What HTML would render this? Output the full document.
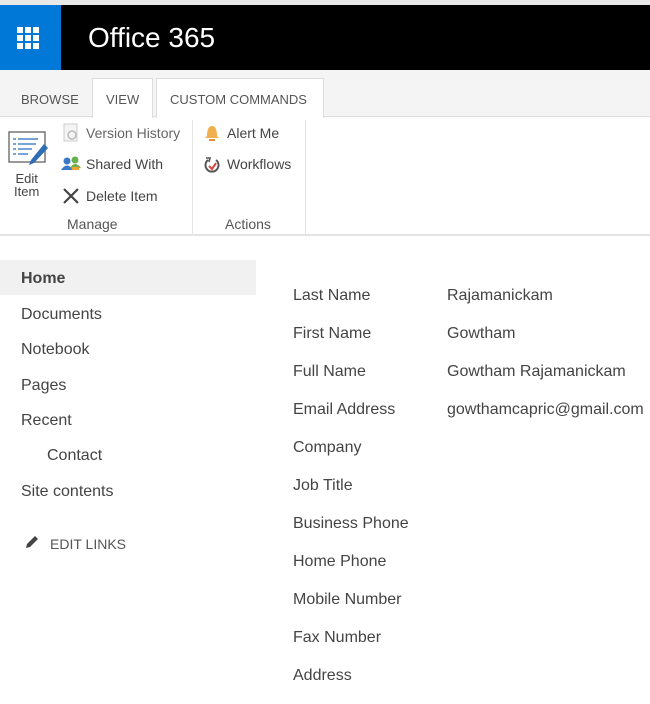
<!DOCTYPE html>
<html><head><style>
*{margin:0;padding:0;box-sizing:border-box}
body{width:650px;height:704px;overflow:hidden;background:#fff;font-family:"Liberation Sans",sans-serif;color:#444;position:relative}
.a{position:absolute;white-space:nowrap}
</style></head><body>
<div class="a" style="left:0;top:0;width:650px;height:5px;background:#e8e8e8"></div>
<div class="a" style="left:0;top:5px;width:650px;height:65px;background:#000"></div>
<div class="a" style="left:0;top:5px;width:61px;height:65px;background:#0078d7"></div>
<svg class="a" style="left:17px;top:27px" width="22" height="22" viewBox="0 0 22 22" fill="#fff">
<rect x="0" y="0" width="6" height="6"/><rect x="8" y="0" width="6" height="6"/><rect x="16" y="0" width="6" height="6"/>
<rect x="0" y="8" width="6" height="6"/><rect x="8" y="8" width="6" height="6"/><rect x="16" y="8" width="6" height="6"/>
<rect x="0" y="16" width="6" height="6"/><rect x="8" y="16" width="6" height="6"/><rect x="16" y="16" width="6" height="6"/></svg>
<div class="a" style="left:88px;top:22px;font-size:28px;color:#fff">Office 365</div>
<div class="a" style="left:0;top:70px;width:650px;height:47px;background:#f4f4f4;border-bottom:1px solid #ddd"></div>
<div class="a" style="left:92px;top:78px;width:61px;height:40px;background:#fff;border:1px solid #ddd;border-bottom:none"></div>
<div class="a" style="left:156px;top:78px;width:168px;height:40px;background:#fff;border:1px solid #ddd;border-bottom:none"></div>
<div class="a" style="left:21px;top:92px;font-size:13px;color:#555">BROWSE</div>
<div class="a" style="left:106px;top:92px;font-size:13px;color:#555">VIEW</div>
<div class="a" style="left:170px;top:92px;font-size:13px;color:#555">CUSTOM COMMANDS</div>
<div class="a" style="left:0;top:234px;width:650px;height:2px;background:#e4e4e4"></div>
<div class="a" style="left:192px;top:120px;width:1px;height:114px;background:#e4e4e4"></div>
<div class="a" style="left:305px;top:120px;width:1px;height:114px;background:#e4e4e4"></div>
<svg class="a" style="left:8px;top:130px" width="40" height="40" viewBox="0 0 40 40">
<rect x="1" y="2" width="36" height="30" fill="#fff" stroke="#777" stroke-width="1.5"/>
<g stroke="#4a86c8" stroke-width="1.5"><line x1="5" y1="9" x2="8" y2="9"/><line x1="10" y1="9" x2="30" y2="9"/><line x1="5" y1="14" x2="8" y2="14"/><line x1="10" y1="14" x2="28" y2="14"/><line x1="5" y1="19" x2="8" y2="19"/><line x1="10" y1="19" x2="24" y2="19"/><line x1="5" y1="24" x2="8" y2="24"/><line x1="10" y1="24" x2="20" y2="24"/></g>
<path d="M36 14 L40 18 L26 33 L21 35 L23 30 Z" fill="#2f6db5"/></svg>
<div class="a" style="left:14px;top:172px;font-size:13px;line-height:13px;color:#444;text-align:center">Edit<br>Item</div>
<svg class="a" style="left:62px;top:123px" width="18" height="20"><rect x="2" y="1" width="13" height="17" fill="#f4f4f4" stroke="#ccc"/><circle cx="10" cy="12" r="4" fill="none" stroke="#bbb" stroke-width="1.5"/></svg>
<div class="a" style="left:86px;top:125px;font-size:14px;color:#666">Version History</div>
<svg class="a" style="left:61px;top:155px" width="22" height="20"><circle cx="6" cy="6" r="3.5" fill="#3a78c8"/><path d="M0 15 Q6 6 12 15Z" fill="#3a78c8"/><circle cx="14" cy="5" r="3.5" fill="#6ab04c"/><path d="M9 13 Q14 5 20 13Z" fill="#6ab04c"/><rect x="11" y="12" width="7" height="3" fill="#f0a030"/></svg>
<div class="a" style="left:86px;top:156px;font-size:14px;color:#444">Shared With</div>
<svg class="a" style="left:62px;top:187px" width="18" height="18"><path d="M2 2 L16 16 M16 2 L2 16" stroke="#444" stroke-width="2.2"/></svg>
<div class="a" style="left:86px;top:188px;font-size:14px;color:#444">Delete Item</div>
<div class="a" style="left:67px;top:216px;font-size:14px;color:#555">Manage</div>
<svg class="a" style="left:204px;top:124px" width="16" height="18"><path d="M3 12 Q3 2 8 2 Q13 2 13 12 L15 14 L1 14 Z" fill="#f0b050"/><rect x="5" y="15" width="6" height="2" fill="#e09030"/></svg>
<div class="a" style="left:227px;top:125px;font-size:14px;color:#444">Alert Me</div>
<svg class="a" style="left:204px;top:156px" width="16" height="18"><path d="M4 4 A6.5 6.5 0 1 0 12 4" fill="none" stroke="#555" stroke-width="2"/><path d="M2 2 L6 2 L5 6" fill="none" stroke="#555" stroke-width="1.6"/><path d="M5 10 L8 13 L12 7" fill="none" stroke="#e04040" stroke-width="2"/></svg>
<div class="a" style="left:227px;top:156px;font-size:14px;color:#444">Workflows</div>
<div class="a" style="left:225px;top:216px;font-size:14px;color:#555">Actions</div>
<div class="a" style="left:0;top:260px;width:256px;height:35px;background:#f1f1f1"></div>
<div class="a" style="left:21px;top:270px;font-size:16px;font-weight:bold;color:#444">Home</div>
<div class="a" style="left:21px;top:306px;font-size:16px">Documents</div>
<div class="a" style="left:21px;top:341px;font-size:16px">Notebook</div>
<div class="a" style="left:21px;top:377px;font-size:16px">Pages</div>
<div class="a" style="left:21px;top:412px;font-size:16px">Recent</div>
<div class="a" style="left:47px;top:447px;font-size:16px">Contact</div>
<div class="a" style="left:21px;top:483px;font-size:16px">Site contents</div>
<svg class="a" style="left:24px;top:534px" width="16" height="16"><path d="M2 14 L3 10 L11 2 L14 5 L6 13 Z" fill="#444"/></svg>
<div class="a" style="left:50px;top:536px;font-size:14px;color:#555">EDIT LINKS</div>
<div class="a" style="left:293px;top:277px;font-size:16px;line-height:38px">Last Name<br>First Name<br>Full Name<br>Email Address<br>Company<br>Job Title<br>Business Phone<br>Home Phone<br>Mobile Number<br>Fax Number<br>Address</div>
<div class="a" style="left:447px;top:277px;font-size:16px;line-height:38px">Rajamanickam<br>Gowtham<br>Gowtham Rajamanickam<br>gowthamcapric@gmail.com</div>
</body></html>
